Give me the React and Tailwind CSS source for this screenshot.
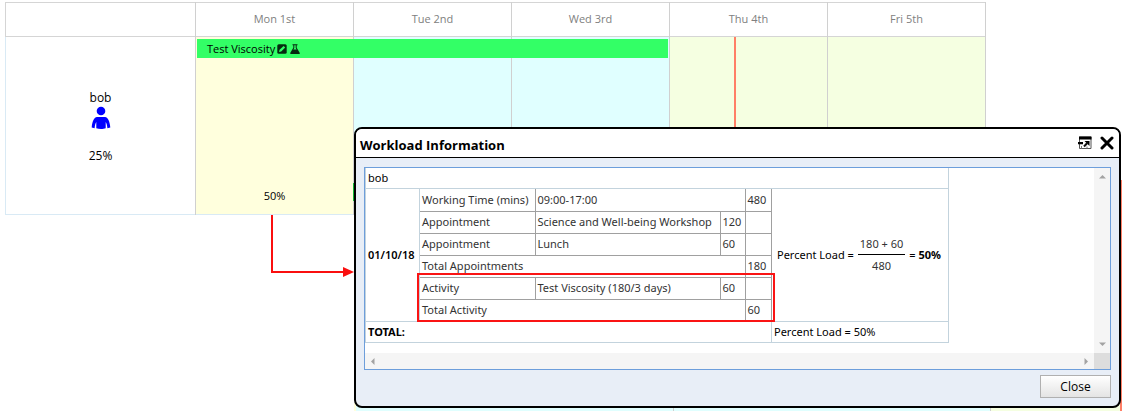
import React from "react";

const days = [
  { label: "Mon 1st", tint: "bg-[#ffffdd]" },
  { label: "Tue 2nd", tint: "bg-[#e0ffff]" },
  { label: "Wed 3rd", tint: "bg-[#e0ffff]" },
  { label: "Thu 4th", tint: "bg-[#f5ffe1]" },
  { label: "Fri 5th", tint: "bg-[#f5ffe1]" },
];

function PersonIcon() {
  return (
    <svg width="20" height="24" viewBox="0 0 20 24" fill="#0000ff" aria-hidden="true">
      <circle cx="10" cy="5" r="4.300" />
      <path d="M6 11h8c3.200.5 4.800 4.500 5.300 10.500l-2.900.8c-.2-2.500-.7-4.600-1.700-6.300v6.300c-2.500 1-6.900 1-9.400 0V16c-1 1.700-1.500 3.800-1.700 6.300L.7 21.500C1.200 15.500 2.800 11.500 6 11z" />
    </svg>
  );
}

function EditIcon() {
  return (
    <svg width="10" height="10" viewBox="0 0 10 10" aria-hidden="true">
      <rect x="0.300" y="0.300" width="9.400" height="9.400" rx="1.500" fill="#062b10" />
      <path d="M2 8l.6-2.200L6.600 1.900l1.600 1.600-4 3.900z" fill="#33ff66" />
    </svg>
  );
}

function FlaskIcon() {
  return (
    <svg width="10" height="10" viewBox="0 0 10 10" aria-hidden="true">
      <path d="M2.500.2h5v1h-.8v2.500L9.800 9c.2.500 0 .9-.6.9H.8c-.6 0-.8-.4-.6-.9l3.100-5.300V1.200h-.8zM4.300 1.200v2.800L3.400 5.600h3.200L5.700 4V1.200z" fill="#062b10" fillRule="evenodd" />
    </svg>
  );
}

function PopOutIcon() {
  return (
    <svg width="14" height="14" viewBox="0 0 14 14" aria-hidden="true">
      <path d="M1.500 1h11.500v11.500H1.500z" fill="#fff" stroke="#555" />
      <path d="M1 .5h12.500v3H1z" fill="#000" />
      <path d="M0 6h5v2.200H0z" fill="#000" />
      <path d="M6.500 5h5v5z" fill="#000" />
      <path d="M9.800 6.500L6 10.500" stroke="#111" strokeWidth="2" />
      <path d="M3.500 10v2.500M9 12.500v-2" stroke="#777" fill="none" />
    </svg>
  );
}

function Schedule() {
  return (
    <table className="ml-[5px] w-[calc(100%-141px)] table-fixed border-collapse border border-[#d9eaf5] text-center text-xs">
      <colgroup>
        <col className="w-[190px]" />
        {days.map((d) => (
          <col key={d.label} />
        ))}
      </colgroup>
      <thead>
        <tr className="h-[34px] border border-[#d5d5d5] text-[#808080]">
          <td className="border-r border-[#d0d0d0]"></td>
          {days.map((d) => (
            <th key={d.label} scope="col" className="border-r border-[#d0d0d0] text-[11px] font-normal">
              {d.label}
            </th>
          ))}
        </tr>
      </thead>
      <tbody>
        <tr className="h-[178px]">
          <th scope="row" className="border-r border-[#d0d0d0] font-normal">
            <div className="flex flex-col items-center pt-[2px] leading-4">
              <span>bob</span>
              <PersonIcon />
              <span className="mt-[18px]">25%</span>
            </div>
          </th>
          {days.map((d, i) => (
            <td key={d.label} className={`relative border-r border-[#d0d0d0] p-0 align-bottom ${d.tint}`}>
              {i === 0 && (
                <>
                  <div className="absolute left-px top-[2px] z-10 flex h-[19px] w-[300%] items-center gap-[2px] bg-[#33ff66] pl-[10px] text-[11px] leading-[18px]">
                    <span>Test Viscosity</span>
                    <EditIcon />
                    <span className="pl-px">
                      <FlaskIcon />
                    </span>
                  </div>
                  <div className="pb-[10px] text-[11px] leading-4">50%</div>
                </>
              )}
              {i === 3 && <div className="absolute inset-y-0 left-[64px] w-[2px] bg-[#ff7f66]"></div>}
            </td>
          ))}
        </tr>
      </tbody>
    </table>
  );
}

const cell = "h-[22px] border border-[#a0a0a0] px-[2px] py-0 text-left font-normal";

function DayBreakdown() {
  return (
    <table className="w-full table-fixed border-collapse border-hidden text-[#333]">
      <colgroup>
        <col className="w-[115px]" />
        <col />
        <col className="w-[25px]" />
        <col className="w-[26px]" />
      </colgroup>
      <tbody>
        <tr>
          <td className={cell}>Working Time (mins)</td>
          <td className={cell} colSpan={2}>09:00-17:00</td>
          <td className={cell}>480</td>
        </tr>
        <tr>
          <td className={cell}>Appointment</td>
          <td className={cell}>Science and Well-being Workshop</td>
          <td className={cell}>120</td>
          <td className={cell}></td>
        </tr>
        <tr>
          <td className={cell}>Appointment</td>
          <td className={cell}>Lunch</td>
          <td className={cell}>60</td>
          <td className={cell}></td>
        </tr>
        <tr>
          <td className={cell} colSpan={3}>Total Appointments</td>
          <td className={cell}>180</td>
        </tr>
        <tr>
          <td className={cell}>Activity</td>
          <td className={cell}>Test Viscosity (180/3 days)</td>
          <td className={cell}>60</td>
          <td className={cell}></td>
        </tr>
        <tr>
          <td className={cell} colSpan={3}>Total Activity</td>
          <td className={cell}>60</td>
        </tr>
      </tbody>
    </table>
  );
}

const outer = "border border-[#c3d3dd] py-0 text-left";

function WorkloadTable() {
  return (
    <div className="relative w-[584px]">
      <table className="-mt-px w-full table-fixed border-collapse font-['Noto_Sans','Open_Sans',sans-serif] text-[11px] leading-4 whitespace-nowrap">
        <colgroup>
          <col className="w-[54px]" />
          <col className="w-[352px]" />
          <col />
        </colgroup>
        <tbody>
          <tr className="h-[21px]">
            <td className={`${outer} px-[2px]`} colSpan={3}>bob</td>
          </tr>
          <tr>
            <th scope="row" className={`${outer} px-[2px] font-semibold`}>01/10/18</th>
            <td className="border border-[#a0a0a0] p-0">
              <DayBreakdown />
            </td>
            <td className={`${outer} px-[5px]`}>
              <div className="flex items-center gap-1">
                <span>Percent Load =</span>
                <span className="flex flex-col text-center text-[#333]">
                  <span className="border-b border-black px-[2px] pb-[2px]">180 + 60</span>
                  <span className="pt-[3px]">480</span>
                </span>
                <span>
                  = <b>50%</b>
                </span>
              </div>
            </td>
          </tr>
          <tr className="h-[21px]">
            <th scope="row" className={`${outer} px-[2px] font-bold`} colSpan={2}>TOTAL:</th>
            <td className={`${outer} px-[2px]`}>Percent Load = 50%</td>
          </tr>
        </tbody>
      </table>
      <div className="absolute left-[52px] top-[106px] h-[49px] w-[358px] border-2 border-[#fa1414]"></div>
    </div>
  );
}

function Arrow({ d }) {
  return (
    <svg width="7" height="7" viewBox="0 0 7 7" fill="#a3a3a3" aria-hidden="true">
      <path d={d} />
    </svg>
  );
}

function WorkloadDialog() {
  return (
    <section
      role="dialog"
      aria-labelledby="workload-title"
      className="absolute left-[354px] right-px top-[127px] z-20 overflow-hidden rounded-lg border-2 border-black bg-[#e8eef7]"
    >
      <header className="flex h-[29px] items-center border-b border-black bg-white pl-1 pr-[5px]">
        <h1 id="workload-title" className="mt-1 text-[13px] font-bold leading-4">Workload Information</h1>
        <button type="button" aria-label="Open in new window" className="ml-auto">
          <PopOutIcon />
        </button>
        <button type="button" aria-label="Close dialog" className="ml-2">
          <svg width="14" height="14" viewBox="0 0 14 14" aria-hidden="true">
            <path d="M2 2l10 10M12 2L2 12" stroke="#000" strokeWidth="3" strokeLinecap="round" />
          </svg>
        </button>
      </header>
      <div className="px-2 pb-2 pt-[9px]">
        <div className="grid grid-cols-[1fr_16px] border border-[#6d9edb] bg-white">
          <div className="h-[185px] overflow-hidden">
            <WorkloadTable />
          </div>
          <div className="flex flex-col items-center justify-between bg-[#f5f5f5] py-[5px]">
            <Arrow d="M0 5.500h7L3.500 2z" />
            <Arrow d="M0 1.500h7L3.500 5z" />
          </div>
          <div className="flex h-4 items-center justify-between bg-[#f5f5f5] px-1">
            <Arrow d="M5.500 0v7L2 3.500z" />
            <Arrow d="M1.500 0v7L5 3.500z" />
          </div>
          <div className="bg-[#dddddd]"></div>
        </div>
        <div className="mt-[5px] flex justify-end">
          <button
            type="button"
            className="h-[23px] w-[71px] border border-[#b0b0b0] bg-linear-to-b from-white to-[#e4e4e4] text-[12px] leading-4"
          >
            Close
          </button>
        </div>
      </div>
    </section>
  );
}

export default function App() {
  return (
    <main className="relative min-h-screen bg-white pt-[2px] font-['Open_Sans','Noto_Sans',sans-serif] text-black">
      <Schedule />
      <div className="absolute left-[353px] top-[183px] h-[18px] w-2 bg-[#12b535]"></div>
      <div className="absolute bottom-0 left-[354px] right-0 flex h-2">
        <div className="w-[2px] bg-[#ffffdd]"></div>
        <div className="w-[318px] border-r border-[#d0d0d0] bg-[#e0ffff]"></div>
        <div className="w-[317px] border-r border-[#d0d0d0] bg-[#e0ffff]"></div>
        <div className="grow bg-[#f5ffe1]"></div>
      </div>
      <div className="absolute bottom-0 right-0 top-[180px] w-[2px] bg-[#ff7f66]"></div>
      <svg className="absolute left-[266px] top-[214px] z-30" width="90" height="66" viewBox="0 0 90 66" aria-hidden="true">
        <path d="M6 1v57h73" fill="none" stroke="#fa0f0f" strokeWidth="2" />
        <path d="M77 53l11 5-11 5z" fill="#fa0f0f" />
      </svg>
      <WorkloadDialog />
    </main>
  );
}
